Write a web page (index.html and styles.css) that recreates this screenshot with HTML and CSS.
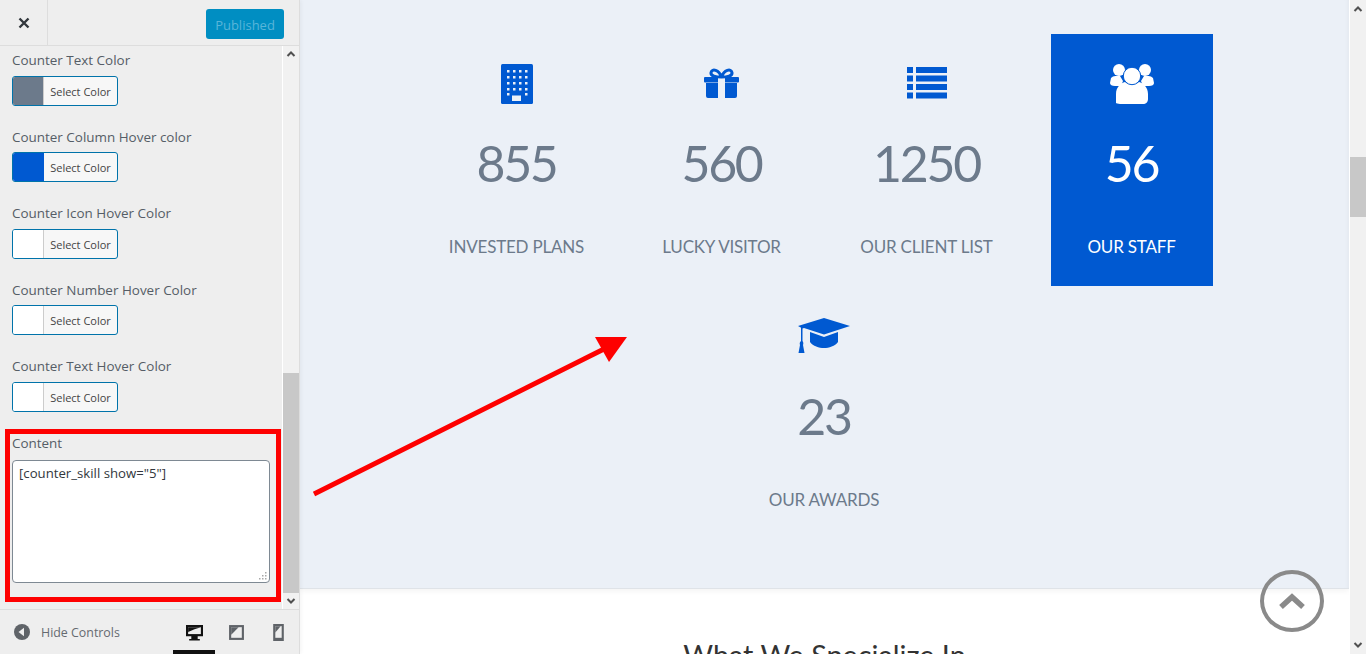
FILE: index.html
```html
<!DOCTYPE html>
<html lang="en">
<head>
<meta charset="utf-8">
<title>Customizer</title>
<link rel="stylesheet" href="styles.css">
</head>
<body>
<div class="app">
  <aside class="sidebar">
    <header class="side-head">
      <div class="close-cell">
        <svg class="close-icon" viewBox="0 0 12 12" width="12" height="12"><path d="M1.500 1.500l9 9M10.500 1.500l-9 9" stroke="#32373c" stroke-width="2.400"/></svg>
      </div>
      <div class="publish">Published</div>
    </header>
    <div class="side-body">
      <div class="controls">
        <div class="control first">
          <div class="label">Counter Text Color</div>
          <div class="picker"><span class="swatch slate"></span><span class="pick-text">Select Color</span></div>
        </div>
        <div class="control">
          <div class="label">Counter Column Hover color</div>
          <div class="picker"><span class="swatch blue"></span><span class="pick-text">Select Color</span></div>
        </div>
        <div class="control">
          <div class="label">Counter Icon Hover Color</div>
          <div class="picker"><span class="swatch white"></span><span class="pick-text">Select Color</span></div>
        </div>
        <div class="control">
          <div class="label">Counter Number Hover Color</div>
          <div class="picker"><span class="swatch white"></span><span class="pick-text">Select Color</span></div>
        </div>
        <div class="control">
          <div class="label">Counter Text Hover Color</div>
          <div class="picker"><span class="swatch white"></span><span class="pick-text">Select Color</span></div>
        </div>
        <div class="control content">
          <div class="label">Content</div>
          <div class="textarea">[counter_skill show="5"]
            <svg class="grip" viewBox="0 0 9 9" width="9" height="9"><path d="M7 1h1.500v1.500H7zM4 4h1.500v1.500H4zM7 4h1.500v1.500H7zM1 7h1.500v1.500H1zM4 7h1.500v1.500H4zM7 7h1.500v1.500H7z" fill="#a8a8a8"/></svg>
          </div>
        </div>
      </div>
      <div class="side-scroll">
        <svg class="arrow-btn" viewBox="0 0 10 8" width="10" height="8"><path d="M1.500 6L5 2.500 8.500 6" fill="none" stroke="#505050" stroke-width="2"/></svg>
        <div class="track"><div class="thumb"></div></div>
        <svg class="arrow-btn" viewBox="0 0 10 8" width="10" height="8"><path d="M1.500 2L5 5.500 8.500 2" fill="none" stroke="#505050" stroke-width="2"/></svg>
      </div>
    </div>
    <footer class="side-foot">
      <div class="hide">
        <svg viewBox="0 0 16 16" width="16" height="16"><circle cx="8" cy="8" r="8" fill="#5f6368"/><path d="M10 3.800v8.400L4.500 8z" fill="#eee"/></svg>
        <span>Hide Controls</span>
      </div>
      <div class="devices">
        <div class="device active">
          <svg viewBox="0 0 16 16" width="17" height="17"><path d="M0 1h16v10.500h-5V14h2v1.500H3V14h2v-2.500H0z" fill="#111"/><path d="M2 3h12v6.500H2z" fill="#eee"/><path d="M2 3h12L8 5 2 7.500z" fill="#111"/></svg>
        </div>
        <div class="device">
          <svg viewBox="0 0 14 16" width="15" height="17"><path d="M0 1h14v14H0z" fill="#5f6368"/><path d="M2 3h10v10H2z" fill="#eee"/><path d="M2 3h7L2 10z" fill="#5f6368"/></svg>
        </div>
        <div class="device">
          <svg viewBox="0 0 10 16" width="11" height="17"><path d="M0 0h10v16H0z" fill="#5f6368"/><path d="M2 2h6v11H2z" fill="#eee"/><path d="M2 2h5L2 8z" fill="#5f6368"/></svg>
        </div>
      </div>
    </footer>
  </aside>
  <main class="preview">
    <div class="page">
      <section class="counters">
        <div class="counter">
          <svg class="ico" viewBox="0 0 32 40" width="32" height="40"><rect width="32" height="40" rx="1.500" fill="#0059d1"/><g fill="#ebf0f7"><path d="M6 6h2.500v2.500H6zM12 6h2.500v2.500H12zM18 6h2.500v2.500H18zM24 6h2.500v2.500H24zM6 12h2.500v2.500H6zM12 12h2.500v2.500H12zM18 12h2.500v2.500H18zM24 12h2.500v2.500H24zM6 18h2.500v2.500H6zM12 18h2.500v2.500H12zM18 18h2.500v2.500H18zM24 18h2.500v2.500H24zM6 24h2.500v2.500H6zM12 24h2.500v2.500H12zM18 24h2.500v2.500H18zM24 24h2.500v2.500H24zM6 29h2.500v2.500H6zM24 29h2.500v2.500H24zM11 31.500h9v5.500h-9z"/></g></svg>
          <div class="num">855</div>
          <div class="cap">INVESTED PLANS</div>
        </div>
        <div class="counter">
          <svg class="ico" viewBox="0 0 35 40" width="35" height="40"><g transform="translate(0 4)"><path d="M2 15h12v15H4a2 2 0 0 1-2-2zM21 15h12v13a2 2 0 0 1-2 2H21z" fill="#0059d1"/><rect x="0" y="9" width="35" height="5.500" rx="1" fill="#0059d1"/><rect x="14" y="9" width="7" height="21" fill="#ebf0f7"/><path d="M17.500 9C15 2 8 0 7 4.500 6.300 8 12 9 17.500 9zM17.500 9C20 2 27 0 28 4.500 28.700 8 23 9 17.500 9z" fill="none" stroke="#0059d1" stroke-width="3"/></g></svg>
          <div class="num">560</div>
          <div class="cap">LUCKY VISITOR</div>
        </div>
        <div class="counter">
          <svg class="ico" viewBox="0 0 40 40" width="40" height="40"><g transform="translate(0 3)" fill="#0059d1"><path d="M0 0h6v6H0zM9 0h31v6H9zM0 8.500h6v6H0zM9 8.500h31v6H9zM0 17h6v6H0zM9 17h31v6H9zM0 25.500h6v6H0zM9 25.500h31v6H9z"/></g></svg>
          <div class="num">1250</div>
          <div class="cap">OUR CLIENT LIST</div>
        </div>
        <div class="counter hovered">
          <svg class="ico" viewBox="0 0 44 40" width="44" height="40"><g fill="#fff"><circle cx="9" cy="6" r="6"/><circle cx="35" cy="6" r="6"/><path d="M1 14a6 6 0 0 1 5-2h4l3 5-2 5H5c-3 0-5-1-5-3z"/><path d="M43 14a6 6 0 0 0-5-2h-4l-3 5 2 5h6c3 0 5-1 5-3z"/><path d="M6 39v-9c0-7 5-11 9-12 3 3 11 3 14 0 4 1 9 5 9 12v5c0 3-2 5-5 5H10c-2 0-4-1-4-1z"/></g><circle cx="22" cy="12" r="8.700" fill="#fff" stroke="#0059d1" stroke-width="1"/></svg>
          <div class="num">56</div>
          <div class="cap">OUR STAFF</div>
        </div>
        <div class="counter">
          <svg class="ico grad" viewBox="0 0 52 36" width="52" height="36"><g fill="#0059d1"><path d="M26 0l26 8-26 8.500L6 10 4.500 10.500 0 8z"/><path d="M12 14l14 5 14-5v10c-3 4-9 6-14 6s-11-2-14-6z"/><path d="M3 9h1.500v14c1 1 1 3 .5 4l1.500 8H.5L2 27c-.5-1-.5-3 1-4z"/></g></svg>
          <div class="num">23</div>
          <div class="cap">OUR AWARDS</div>
        </div>
      </section>
      <section class="special">
        <h2>What We Specialize In</h2>
      </section>
    </div>
    <div class="to-top">
      <svg viewBox="0 0 28 20" width="28" height="20"><path d="M3 16L14 6l11 10" fill="none" stroke="#8a8a8a" stroke-width="5.500"/></svg>
    </div>
    <div class="page-scroll">
      <svg class="arrow-btn" viewBox="0 0 10 8" width="10" height="8"><path d="M1.500 6L5 2.500 8.500 6" fill="none" stroke="#505050" stroke-width="2"/></svg>
      <div class="page-track"><div class="page-thumb"></div></div>
      <svg class="arrow-btn" viewBox="0 0 10 8" width="10" height="8"><path d="M1.500 2L5 5.500 8.500 2" fill="none" stroke="#505050" stroke-width="2"/></svg>
    </div>
  </main>
</div>
<div class="red-box"></div>
<svg class="red-arrow" viewBox="0 0 330 170" width="330" height="170"><path d="M2 158L298 10" stroke="#fe0000" stroke-width="5" fill="none"/><path d="M315 1H283l14 25z" fill="#fe0000"/></svg>
</body>
</html>
```
FILE: styles.css
```css
* { box-sizing: border-box; }
html, body { margin: 0; height: 100%; overflow: hidden; }
body { position: relative; font-family: "Open Sans", "Noto Sans", sans-serif; color: #555d66; background: #fff; }
.app { display: flex; height: 654px; }

.sidebar { position: relative; z-index: 1; width: 300px; flex: none; display: flex; flex-direction: column; background: #eee; border-right: 1px solid #ddd; box-shadow: 1px 0 4px rgba(0,0,0,.05); }
.side-head { height: 46px; flex: none; display: flex; justify-content: space-between; border-bottom: 1px solid #ddd; padding-right: 15px; }
.close-cell { width: 48px; height: 45px; display: flex; align-items: center; justify-content: center; border-right: 1px solid #ddd; }
.publish { margin-top: 9px; width: 78px; height: 30px; background: #008ec2; border-radius: 3px; color: #58b5d9; font-size: 13px; line-height: 32px; text-align: center; }

.side-body { flex: 1; min-height: 0; display: flex; }
.controls { flex: 1; min-width: 0; padding: 0 12px; }
.control { height: 76.500px; }
.label { font-size: 13.450px; line-height: 18px; color: #555d66; }
.control.first { height: 81.500px; padding-top: 5px; }
.picker { display: flex; width: 106px; height: 30px; margin-top: 6.600px; border: 1px solid #0073aa; border-radius: 3px; background: #f7f7f7; overflow: hidden; }
.swatch { width: 31px; flex: none; border-right: 1px solid #ccc; }
.swatch.slate { background: #6c7a8b; }
.swatch.blue { background: #0059d1; border-right-color: #0059d1; }
.swatch.white { background: #fff; }
.pick-text { flex: 1; text-align: center; font-size: 11px; line-height: 29px; color: #444; }
.control.content { height: auto; padding-top: .5px; }
.textarea { position: relative; width: 258px; height: 123px; margin-top: 7.500px; padding: 3px 6px; background: #fff; border: 1px solid #7e8993; border-radius: 4px; font-size: 13.200px; line-height: 18px; color: #32373c; }
.grip { position: absolute; right: 2px; bottom: 2px; }

.side-scroll { width: 17px; flex: none; display: flex; flex-direction: column; align-items: center; background: #f1f1f1; border-left: 1px solid #fff; padding: 4px 0; }
.track { flex: 1; width: 100%; display: flex; flex-direction: column; justify-content: flex-end; margin: 4px 0; }
.thumb { height: 220px; background: #c8c8c8; }
.arrow-btn { flex: none; }

.side-foot { height: 45px; flex: none; display: flex; align-items: center; justify-content: space-between; border-top: 1px solid #ddd; padding-left: 14px; }
.hide { display: flex; align-items: center; gap: 11px; font-size: 12.400px; color: #656a70; }
.devices { display: flex; height: 100%; }
.device { width: 42px; padding-top: 4px; display: flex; align-items: center; justify-content: center; border-bottom: 4px solid transparent; }
.device.active { border-bottom-color: #111; }

.preview { position: relative; flex: 1; min-width: 0; display: flex; overflow: hidden; }
.page { flex: 1; min-width: 0; font-family: "Lato", "Open Sans", sans-serif; }
.counters { height: 589px; padding: 34px 115px 0 114px; background: #ebf0f7; border-bottom: 1px solid #dfe3e8; box-shadow: 0 2px 6px rgba(0,0,0,.05), inset -4px 0 4px -3px rgba(0,0,0,.04); display: flex; flex-wrap: wrap; justify-content: center; align-content: flex-start; row-gap: 1px; }
.counter { width: 205px; height: 252px; padding: 30px 21px 0; display: flex; flex-direction: column; align-items: center; color: #6c7a8b; }
.counter.hovered { color: #fff; position: relative; }
.counter.hovered::before { content: ""; position: absolute; top: 0; bottom: 0; left: 22px; right: 21px; background: #0059d1; }
.counter.hovered > * { position: relative; }
.ico { display: block; height: 40px; flex: none; }
.ico.grad { height: 36px; margin-top: 1px; margin-bottom: 3px; }
.num { margin-top: 28px; font-size: 50px; line-height: 62px; letter-spacing: -2.300px; white-space: nowrap; }
.cap { margin-top: 41px; font-size: 17px; line-height: 24px; letter-spacing: -.2px; white-space: nowrap; }
.special { text-align: center; }
.special h2 { margin: 51px 0 0; font-size: 28.800px; line-height: 30px; font-weight: 400; color: #333; }

.page-scroll { width: 17px; flex: none; display: flex; flex-direction: column; align-items: center; padding: 5px 0; background: #f1f1f1; border-left: 1px solid #fff; }
.page-track { flex: 1; width: 100%; }
.page-thumb { height: 60px; margin-top: 144px; background: #c8c8c8; }

.to-top { position: absolute; left: 960px; top: 570px; width: 64px; height: 62px; border: 4px solid #8a8a8a; border-radius: 50%; display: flex; align-items: center; justify-content: center; }

.red-box { position: absolute; z-index: 2; left: 5px; top: 429px; width: 276px; height: 173px; border: 5px solid #fe0000; }
.red-arrow { position: absolute; z-index: 2; left: 312px; top: 336px; }
```
